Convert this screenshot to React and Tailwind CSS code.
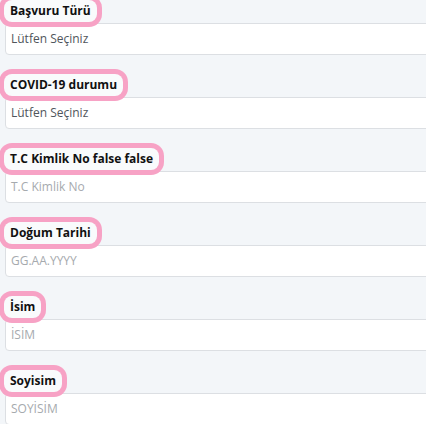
const fields = [
  { label: "Başvuru Türü", value: "Lütfen Seçiniz", select: true },
  { label: "COVID-19 durumu", value: "Lütfen Seçiniz", select: true },
  { label: "T.C Kimlik No false false", value: "T.C Kimlik No" },
  { label: "Doğum Tarihi", value: "GG.AA.YYYY" },
  { label: "İsim", value: "İSİM" },
  { label: "Soyisim", value: "SOYİSİM" },
];

function Field({ label, value, select }) {
  return (
    <div className="mb-[19px]">
      <div className="mb-[1px] flex">
        <span className="relative z-10 ml-[4px] inline-block h-[22px] rounded-[8px] bg-[#f9fbfc] px-[6px] text-[12px] font-bold leading-[22px] text-[#111] ring-[5px] ring-[#f7a2c5]">
          {label}
        </span>
      </div>
      <div className="ml-[5px] flex h-[32px] w-[460px] items-center rounded-[4px] border border-[#dcdfe3] bg-white px-[5px]">
        <span className={`text-[12px] ${select ? "text-[#50555b]" : "text-[#a6aaae]"}`}>{value}</span>
      </div>
    </div>
  );
}

export default function App() {
  return (
    <div
      className="h-[424px] w-[426px] overflow-hidden bg-[#f3f6f9]"
      style={{ fontFamily: "'Open Sans', 'Noto Sans', sans-serif" }}
    >
      {fields.map((f) => (
        <Field key={f.label} {...f} />
      ))}
    </div>
  );
}
